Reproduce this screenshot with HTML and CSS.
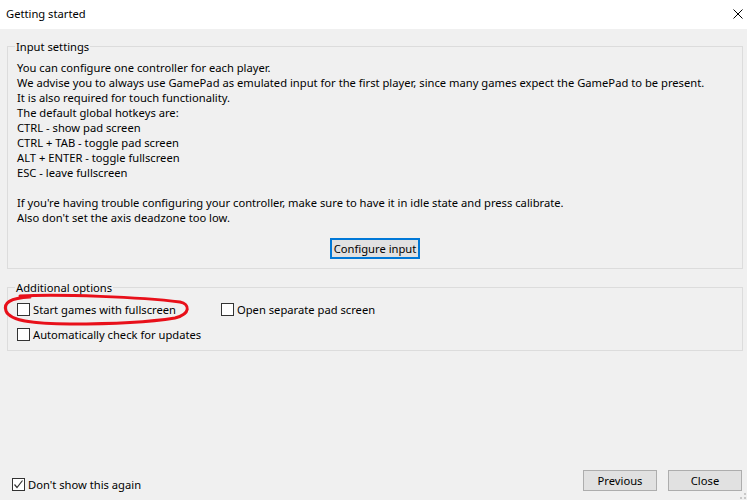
FILE: index.html
```html
<!DOCTYPE html>
<html>
<head>
<meta charset="utf-8">
<title>Getting started</title>
<link rel="stylesheet" href="styles.css">
</head>
<body>
<div class="window">
  <div class="titlebar">
    <span class="title">Getting started</span>
    <svg class="close" width="10" height="10" viewBox="0 0 10 10"><path d="M0.5 0.5 L9.5 9.5 M9.5 0.5 L0.5 9.5" stroke="#000" stroke-width="1" fill="none"/></svg>
  </div>
  <div class="content">
    <fieldset class="group">
      <legend>Input settings</legend>
      <div class="info">
        <div>You can configure one controller for each player.</div>
        <div>We advise you to always use GamePad as emulated input for the first player, since many games expect the GamePad to be present.</div>
        <div>It is also required for touch functionality.</div>
        <div>The default global hotkeys are:</div>
        <div>CTRL - show pad screen</div>
        <div>CTRL + TAB - toggle pad screen</div>
        <div>ALT + ENTER - toggle fullscreen</div>
        <div>ESC - leave fullscreen</div>
        <div class="blank"></div>
        <div>If you're having trouble configuring your controller, make sure to have it in idle state and press calibrate.</div>
        <div>Also don't set the axis deadzone too low.</div>
      </div>
      <div class="center">
        <button class="btn btn-default">Configure input</button>
      </div>
    </fieldset>
    <fieldset class="group group2">
      <legend>Additional options</legend>
      <div class="options">
        <label class="check marked"><span class="box"></span><span>Start games with fullscreen</span><svg class="scribble" width="200" height="36" viewBox="0 0 200 36"><path d="M20 4 C60 2 140 5 180 10 C190 12 191 22 175 26 C150 30 110 32 70 32 C40 32 10 30 6 19 C3 11 10 6 30 5" stroke="#e8101a" stroke-width="3" fill="none" stroke-linecap="round"/></svg></label>
        <label class="check"><span class="box"></span><span>Open separate pad screen</span></label>
        <label class="check"><span class="box"></span><span>Automatically check for updates</span></label>
      </div>
    </fieldset>
  </div>
  <div class="bottombar">
    <label class="check dontshow"><span class="box"><svg width="11" height="11" viewBox="0 0 11 11"><path d="M1.5 5.5 L4 8.5 L9.5 1.5" stroke="#333" stroke-width="1.2" fill="none"/></svg></span><span>Don't show this again</span></label>
    <div class="buttons">
      <button class="btn">Previous</button>
      <button class="btn">Close</button>
    </div>
  </div>
  <svg class="grip" width="6" height="6" viewBox="0 0 6 6"><rect x="4" y="0" width="2" height="2" fill="#c8c8c8"/><rect x="0" y="4" width="2" height="2" fill="#c8c8c8"/><rect x="4" y="4" width="2" height="2" fill="#c8c8c8"/></svg>
</div>
</body>
</html>
```
FILE: styles.css
```css
* { box-sizing: border-box; }
html, body { margin: 0; padding: 0; }
body {
  font-family: "Noto Sans", "Open Sans", sans-serif;
  font-size: 11.2px;
  line-height: 15px;
  color: #000;
  background: #f0f0f0;
}
.window {
  width: 747px;
  height: 500px;
  display: flex;
  flex-direction: column;
  background: #f0f0f0;
  position: relative;
  overflow: hidden;
}
.titlebar {
  height: 29px;
  background: #fff;
  display: flex;
  align-items: center;
  justify-content: space-between;
  padding: 0 4px 1px 6px;
  flex: none;
}
.title { line-height: 16px; }
.close { display: block; }
.content {
  padding: 10px 4px 0 7px;
}
.group {
  margin: 0;
  border: 1px solid #dcdcdc;
  padding: 0 9px 9px 9px;
  min-width: 0;
}
.group legend {
  padding: 0 1px;
  margin-left: -2px;
  line-height: 15px;
}
.info {
  margin-top: 6px;
  line-height: 15px;
}
.info > div { white-space: nowrap; }
.info .blank { height: 15px; }
.center {
  display: flex;
  justify-content: center;
  margin-top: 13px;
}
.btn {
  font: inherit;
  font-size: 11.2px;
  color: #000;
  background: #e1e1e1;
  border: 1px solid #adadad;
  height: 21px;
  padding: 0;
  line-height: 17px;
  border-radius: 0;
  white-space: nowrap;
}
.btn-default {
  width: 90px;
  border: 2px solid #0078d7;
}
.group2 { margin-top: 11px; padding-bottom: 7px; }
.options {
  margin-top: 6px;
  display: grid;
  grid-template-columns: 204px auto;
  row-gap: 8px;
}
.check {
  display: flex;
  align-items: center;
  height: 17px;
  gap: 3px;
  white-space: nowrap;
}
.marked { position: relative; }
.box {
  width: 13px;
  height: 13px;
  border: 1px solid #333;
  background: #fff;
  flex: none;
  display: flex;
  align-items: center;
  justify-content: center;
}
.box svg { display: block; }
.scribble {
  position: absolute;
  left: -17px;
  top: -9px;
  pointer-events: none;
}
.bottombar {
  margin-top: auto;
  display: flex;
  justify-content: space-between;
  padding: 0 5px 9px 12px;
  height: 30px;
}
.dontshow {
  align-self: flex-end;
  margin-bottom: -2px;
}
.buttons {
  display: flex;
  gap: 11px;
}
.buttons .btn { width: 74px; }
.grip {
  position: absolute;
  right: 1px;
  bottom: 1px;
}
```
